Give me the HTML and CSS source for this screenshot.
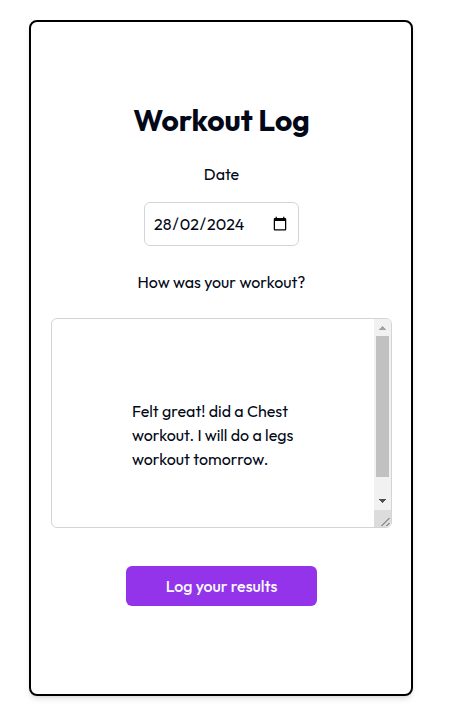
FILE: index.html
```html
<!DOCTYPE html>
<html lang="en-GB">
<head>
<meta charset="utf-8">
<meta name="viewport" content="width=device-width, initial-scale=1">
<title>Workout Log</title>
<link rel="stylesheet" href="styles.css">
</head>
<body>
<main class="card">
  <h1 class="title">Workout Log</h1>
  <form class="form">
    <label class="label" for="date">Date</label>
    <input class="date-input" id="date" type="date" value="2024-02-28">
    <label class="label label-notes" for="notes">How was your workout?</label>
    <div class="notes-field">
      <textarea class="notes" id="notes">Felt great! did a Chest
workout. I will do a legs
workout tomorrow.</textarea>
      <div class="scrollbar" aria-hidden="true">
        <svg class="arrow" viewBox="0 0 17 17"><path fill="#a3a3a3" d="M8 7h1v1h1v1h1v1h1v1H5v-1h1V9h1V8h1z"/></svg>
        <div class="track"><div class="thumb"></div></div>
        <svg class="arrow" viewBox="0 0 17 17"><path fill="#505050" d="M5 6h7v1h-1v1h-1v1H9v1H8V9H7V8H6V7H5z"/></svg>
        <svg class="corner" viewBox="0 0 17 17"><path fill="none" stroke="#505050" d="M7.500 16l8-8M12.500 16l3-3"/></svg>
      </div>
    </div>
    <button class="submit" type="submit">Log your results</button>
  </form>
</main>
</body>
</html>
```
FILE: styles.css
```css
* {
  box-sizing: border-box;
}

body {
  margin: 0;
  padding: 20px 37px 20px 29px;
  background: #fff;
  color: #020817;
  font: 16px/24px Outfit, Lato, sans-serif;
}

.card {
  max-width: 384px;
  margin: 0 auto;
  padding: 80px 19px 88px 20px;
  border: 2px solid #000;
  border-radius: 8px;
  box-shadow: 0 4px 6px -1px rgb(0 0 0 / 10%), 0 2px 4px -2px rgb(0 0 0 / 10%);
}

.title {
  margin: 0 0 24px;
  font-size: 30px;
  line-height: 36px;
  font-weight: 700;
  text-align: center;
}

.form {
  display: flex;
  flex-direction: column;
  align-items: center;
}

.label {
  margin-bottom: 16px;
}

.label-notes {
  margin-bottom: 24px;
}

.date-input {
  width: 155px;
  height: 44px;
  margin-bottom: 24px;
  padding: 8px;
  border: 1px solid #d1d5db;
  border-radius: 6px;
  background: #fff;
  color: inherit;
  font: inherit;
}

/* Day first, whatever order the browser's locale uses */
.date-input::-webkit-datetime-edit-fields-wrapper {
  display: inline-grid;
  grid-template-columns: repeat(5, auto);
}

.date-input::-webkit-datetime-edit-day-field {
  grid-area: 1 / 1;
}

.date-input::-webkit-datetime-edit-month-field {
  grid-area: 1 / 3;
}

.date-input::-webkit-datetime-edit-year-field {
  grid-area: 1 / 5;
}

.notes-field {
  position: relative;
  width: 100%;
  margin-bottom: 38px;
}

.notes {
  display: block;
  width: 100%;
  height: 210px;
  padding: 80px;
  border: 1px solid #d1d5db;
  border-radius: 6px;
  background: #fff;
  color: inherit;
  font: inherit;
  white-space: pre;
  resize: none;
  overflow: hidden;
}

.scrollbar {
  position: absolute;
  inset: 1px 1px 1px auto;
  display: flex;
  flex-direction: column;
  width: 17px;
  border-radius: 0 5px 5px 0;
  background: #f1f1f1;
  overflow: hidden;
  pointer-events: none;
}

.arrow,
.corner {
  flex: none;
  width: 17px;
  height: 17px;
}

.corner {
  background: #dcdcdc;
}

.track {
  flex: 1;
  padding: 0 2px;
}

.thumb {
  height: 90%;
  background: #c1c1c1;
}

.submit {
  width: 191px;
  height: 40px;
  padding: 0;
  border: 0;
  border-radius: 6px;
  background: #9333ea;
  color: #f8fafc;
  font: inherit;
  font-weight: 500;
}
```
